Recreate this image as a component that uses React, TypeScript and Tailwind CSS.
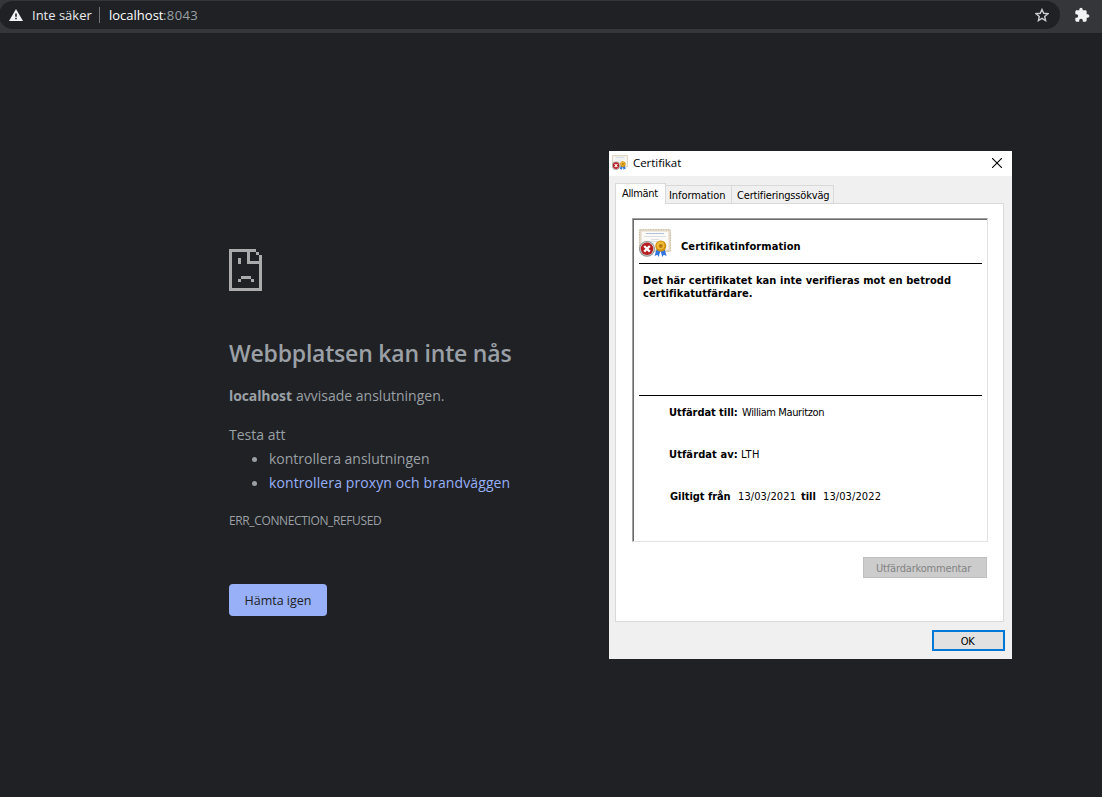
import type { ReactNode } from "react";

function SadPage() {
  return (
    <svg width="33" height="42" viewBox="0 0 33 42" fill="#ababab" shapeRendering="crispEdges">
      <path d="M0 0h27v3H3v36h27V15H18V3h3v9h9V6h3v36H0z" />
      <path d="M27 3h3v3h-3zM9 9h3v6H9zM12 27h10v3H12zM9 30h3v3H9zM22 30h3v3h-3z" />
    </svg>
  );
}

function CertIcon({ width, height }: { width: number; height: number }) {
  return (
    <svg width={width} height={height} viewBox="0 0 32 28" preserveAspectRatio="none">
      <rect x="0.5" y="0.5" width="31" height="22" rx="0.8" fill="#e3d7c5" stroke="#cdbda6" strokeDasharray="1.5 1" />
      <rect x="2.5" y="2.5" width="27" height="18" fill="#fbfaf6" />
      <path d="M7 4.5h18" stroke="#b4c2e0" />
      <path d="M5 7.500h22M12 10.500h8M9 12.500h14" stroke="#dcdee3" />
      <path d="M17.6 20l-2 7 2.8-1.3 1.3 2.2 2-6.9zM25.6 20l2 7-2.8-1.3-1.5 2.2-2-6.9z" fill="#2f74df" />
      <circle cx="21.8" cy="17" r="5.5" fill="#d0900f" />
      <circle cx="21.5" cy="16.5" r="3.9" fill="#efba35" />
      <circle cx="21.8" cy="17" r="1.9" fill="#b8790c" />
      <circle cx="8" cy="19.8" r="7.9" fill="#8f8f8f" />
      <circle cx="8" cy="19.8" r="7" fill="#cfcfcf" />
      <circle cx="8" cy="19.8" r="6.2" fill="#b71c1f" />
      <path d="M5.2 17l5.6 5.6M10.8 17l-5.6 5.6" stroke="#fff" strokeWidth="2.3" />
    </svg>
  );
}

function Label({ children }: { children: ReactNode }) {
  return <span className="font-bold text-black">{children}</span>;
}

function AddressBar() {
  return (
    <header className="flex h-[33px] shrink-0 bg-[#35363a] pt-px font-['Open_Sans',sans-serif] text-[13px]">
      <div className="-ml-px flex h-7 w-[1061px] items-center rounded-full bg-[#202124] pl-[10px] whitespace-nowrap">
        <svg width="14" height="12" viewBox="0 0 14 12">
          <path d="M7 0l7 12H0z" fill="#f1f3f4" />
          <path d="M6.2 4.5h1.6v3.2H6.2zM6.2 8.8h1.6v1.5H6.2z" fill="#202124" />
        </svg>
        <span className="mt-0.5 ml-[9px] w-[67px] text-[#e8eaed]">Inte säker</span>
        <span className="h-4 w-px bg-[#72747a]" />
        <span className="mt-0.5 ml-[9px] w-[54px] text-white">localhost</span>
        <span className="mt-0.5 tracking-[0.4px] text-[#9aa0a6]">:8043</span>
        <svg className="mr-[11px] ml-auto" width="14" height="14" viewBox="0 0 14 14" fill="none" stroke="#c9cbce" strokeWidth="1.4">
          <path d="M7 1.500l1.700 3.800 4.200.4-3.200 2.800.9 4.100L7 10.400l-3.600 2.200.9-4.100L1.100 5.700l4.200-.4z" />
        </svg>
      </div>
      <svg className="mt-[6px] ml-[14px]" width="16" height="16" viewBox="0 0 24 24" fill="#f1f3f4">
        <path d="M20.5 11H19V7c0-1.100-.9-2-2-2h-4V3.500C13 2.120 11.880 1 10.500 1S8 2.120 8 3.500V5H4c-1.100 0-1.990.9-1.990 2v3.800H3.500c1.490 0 2.700 1.210 2.700 2.700s-1.210 2.700-2.700 2.700H2V20c0 1.100.9 2 2 2h3.800v-1.500c0-1.490 1.210-2.700 2.700-2.700s2.700 1.210 2.700 2.700V22H17c1.100 0 2-.9 2-2v-4h1.500c1.380 0 2.500-1.120 2.500-2.500S21.880 11 20.500 11z" />
      </svg>
    </header>
  );
}

function ErrorPage() {
  return (
    <main className="flex flex-col items-start pt-[216px] pl-[229px] font-['Open_Sans',sans-serif] text-[14px] leading-6 whitespace-nowrap text-[#9aa0a6]">
      <SadPage />
      <h1 className="mt-[47px] text-[23px] leading-[30px] font-semibold tracking-[-0.21px]">Webbplatsen kan inte nås</h1>
      <p className="mt-4 flex">
        <b className="w-[67px] font-bold tracking-[-0.1px]">localhost</b>
        <span>avvisade anslutningen.</span>
      </p>
      <p className="mt-[15px]">Testa att</p>
      <ul className="flex flex-col">
        <li className="flex items-center">
          <span className="mr-3 ml-[23px] size-[5px] rounded-full bg-[#9aa0a6]" />
          <span>kontrollera anslutningen</span>
        </li>
        <li className="flex items-center">
          <span className="mr-3 ml-[23px] size-[5px] rounded-full bg-[#9aa0a6]" />
          <a className="tracking-[0.1px] text-[#97b0f8]">kontrollera proxyn och brandväggen</a>
        </li>
      </ul>
      <p className="mt-[14px] text-[12px] tracking-[-0.37px]">ERR_CONNECTION_REFUSED</p>
      <button className="mt-[51px] h-8 w-[98px] rounded bg-[#97b0f8] pt-0.5 text-[12.500px] text-[#202124]">Hämta igen</button>
    </main>
  );
}

function CertificateDialog() {
  return (
    <section className="absolute top-[151px] left-[609px] flex h-[508px] w-[403px] flex-col bg-[#f0f0f0] font-['DejaVu_Sans_Condensed','DejaVu_Sans',sans-serif] text-[11px] leading-[13px] whitespace-nowrap text-black">
      <div className="flex h-[25px] shrink-0 items-center bg-white pr-[10px] pb-0.5 pl-[3px]">
        <CertIcon width={16} height={15} />
        <span className="ml-[5px] font-['Open_Sans',sans-serif] text-[11.500px] tracking-[-0.05px]">Certifikat</span>
        <svg className="ml-auto" width="10" height="10" viewBox="0 0 10 10" stroke="#000" strokeWidth="1.100">
          <path d="M0 0l10 10M10 0L0 10" />
        </svg>
      </div>
      <div className="mt-[7px] ml-[6px] flex h-[21px] shrink-0 items-end">
        <div className="z-10 h-[21px] w-[51px] border border-b-0 border-[#d9d9d9] bg-white pt-[3px] pl-[6px] tracking-[-0.35px]">Allmänt</div>
        <div className="h-[19px] w-[66px] border border-l-0 border-[#d9d9d9] pt-[3px] pl-[3px] tracking-[-0.08px]">Information</div>
        <div className="h-[19px] w-[102px] border border-l-0 border-[#d9d9d9] pt-[3px] pl-[5px] tracking-[-0.17px]">Certifieringssökväg</div>
      </div>
      <div className="-mt-px ml-[6px] flex h-[419px] w-[389px] shrink-0 flex-col border border-[#d9d9d9] bg-white pt-[14px] pl-4">
        <div className="h-[324px] w-[356px] border border-t-[#a0a0a0] border-r-[#e3e3e3] border-b-[#e3e3e3] border-l-[#a0a0a0]">
          <div className="flex h-full flex-col border-t border-l border-[#696969] pr-[5px] pl-[5px]">
            <div className="flex h-[44px] shrink-0 border-b border-black pt-[9px]">
              <CertIcon width={32} height={28} />
              <span className="mt-[11px] ml-[10px] font-bold tracking-[0.08px]">Certifikatinformation</span>
            </div>
            <p className="h-[132px] shrink-0 border-b border-black pt-[10px] pl-1 font-bold tracking-[0.075px]">
              Det här certifikatet kan inte verifieras mot en betrodd
              <br />
              certifikatutfärdare.
            </p>
            <div className="mt-[10px] flex flex-col gap-[29px] pl-[30px]">
              <div className="flex">
                <span className="w-[73px] tracking-[-0.05px]"><Label>Utfärdat till:</Label></span>
                <span className="tracking-[-0.38px]">William Mauritzon</span>
              </div>
              <div className="flex">
                <span className="w-[72px] tracking-[0.1px]"><Label>Utfärdat av:</Label></span>
                <span className="tracking-[0.5px]">LTH</span>
              </div>
              <div className="flex">
                <span className="w-[68px] pl-px tracking-[-0.05px]"><Label>Giltigt från</Label></span>
                <span className="w-[64px] pl-px tracking-[0.1px]">13/03/2021</span>
                <span className="w-[21px]"><Label>till</Label></span>
                <span className="pl-px tracking-[0.1px]">13/03/2022</span>
              </div>
            </div>
          </div>
        </div>
        <button className="mt-[15px] ml-[231px] h-[21px] w-[124px] border border-[#bfbfbf] bg-[#ccc] pt-0.5 pr-[3px] tracking-[-0.17px] text-[#838383]">Utfärdarkommentar</button>
      </div>
      <button className="mt-2 ml-[323px] h-[21px] w-[73px] shrink-0 border-2 border-[#0078d7] bg-[#e1e1e1] pt-0.5 pr-[2px] tracking-[-0.3px]">OK</button>
    </section>
  );
}

export default function App() {
  return (
    <div className="relative flex h-[797px] w-[1102px] flex-col overflow-hidden bg-[#202124]">
      <AddressBar />
      <ErrorPage />
      <CertificateDialog />
    </div>
  );
}
